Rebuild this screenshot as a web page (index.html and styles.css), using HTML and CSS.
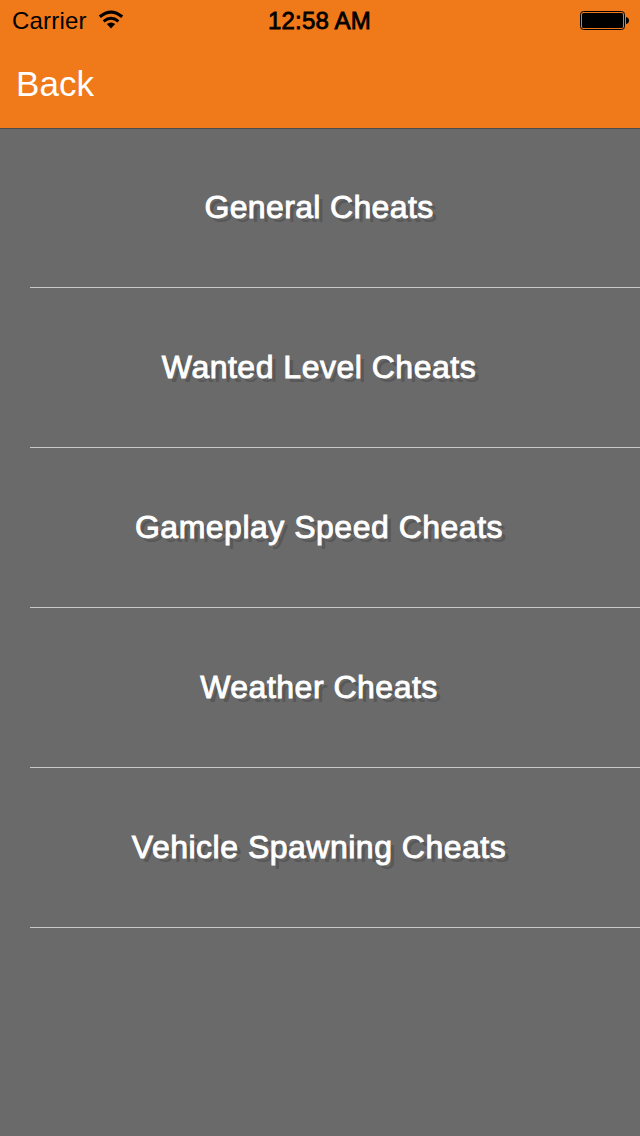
FILE: index.html
```html
<!DOCTYPE html>
<html lang="en">
<head>
    <meta charset="UTF-8">
    <meta name="viewport" content="width=device-width, initial-scale=1.0">
    <title>Cheats</title>
    <link rel="stylesheet" href="styles.css">
</head>
<body>

    <header class="top-bar">
        <!-- Status Bar -->
        <div class="status-bar">
            <div class="carrier">
                <span>Carrier</span>
                <svg class="wifi" width="26" height="20" viewBox="0 0 26 20">
                    <path d="M1.8 6.8 Q13 -2.6 24.2 6.8" fill="none" stroke="#000" stroke-width="3.2"/>
                    <path d="M5.6 11.3 Q13 5.2 20.4 11.3" fill="none" stroke="#000" stroke-width="3"/>
                    <path d="M8.8 14 Q13 11 17.2 14 L13 18.6 Z" fill="#000"/>
                </svg>
            </div>
            <div class="time">12:58 AM</div>
            <div class="battery">
                <svg width="50" height="20" viewBox="0 0 50 20">
                    <rect x="0.5" y="1.5" width="44" height="18" rx="3" fill="none" stroke="#000"/>
                    <rect x="2" y="3" width="41" height="15" rx="1.5" fill="#000"/>
                    <path d="M46 7 Q49 7.5 49 10.5 Q49 13.5 46 14 Z" fill="#000"/>
                </svg>
            </div>
        </div>

        <!-- Navigation -->
        <nav class="nav-bar">
            <a class="back" href="#">Back</a>
        </nav>
    </header>

    <!-- Cheat Categories -->
    <ul class="cheat-list">
        <li class="general">General Cheats</li>
        <li>Wanted Level Cheats</li>
        <li>Gameplay Speed Cheats</li>
        <li>Weather Cheats</li>
        <li>Vehicle Spawning Cheats</li>
    </ul>

</body>
</html>
```
FILE: styles.css
```css
body {
    margin: 0;
    min-height: 100vh;
    background-color: #6a6a6a;
    font-family: "Liberation Sans", Arial, sans-serif;
}
.top-bar {
    height: 128px;
    background-color: #f0791a;
    box-shadow: 0 1px 0 #4b4b4b;
}
.status-bar {
    display: grid;
    grid-template-columns: 1fr auto 1fr;
    height: 40px;
    align-items: center;
    padding: 0 10px 0 12px;
    box-sizing: border-box;
    color: #000;
    font-size: 24px;
    line-height: 38px;
}
.carrier {
    display: flex;
    align-items: center;
    gap: 11px;
    letter-spacing: 0.2px;
}
.carrier span {
    padding-top: 2px;
}
.time {
    padding: 2px 3px 0 0;
    letter-spacing: 0.2px;
    -webkit-text-stroke: 0.8px #000;
}
.battery {
    display: flex;
    justify-content: flex-end;
}
.nav-bar {
    display: flex;
    height: 88px;
    align-items: center;
    padding: 0 16px;
}
.back {
    color: #fff;
    font-size: 35px;
    letter-spacing: 0.1px;
    text-decoration: none;
}
.cheat-list {
    list-style: none;
    margin: 0;
    padding: 0 0 0 30px;
}
.cheat-list li {
    display: flex;
    height: 160px;
    align-items: center;
    justify-content: center;
    padding-right: 32px;
    box-sizing: border-box;
    border-bottom: 1px solid #c8c8c8;
    color: #fff;
    font-size: 32px;
    letter-spacing: 0.5px;
    -webkit-text-stroke: 0.9px #fff;
    text-shadow: 4px 4px 0 #585858;
}
.cheat-list .general {
    letter-spacing: 0.35px;
}
```
